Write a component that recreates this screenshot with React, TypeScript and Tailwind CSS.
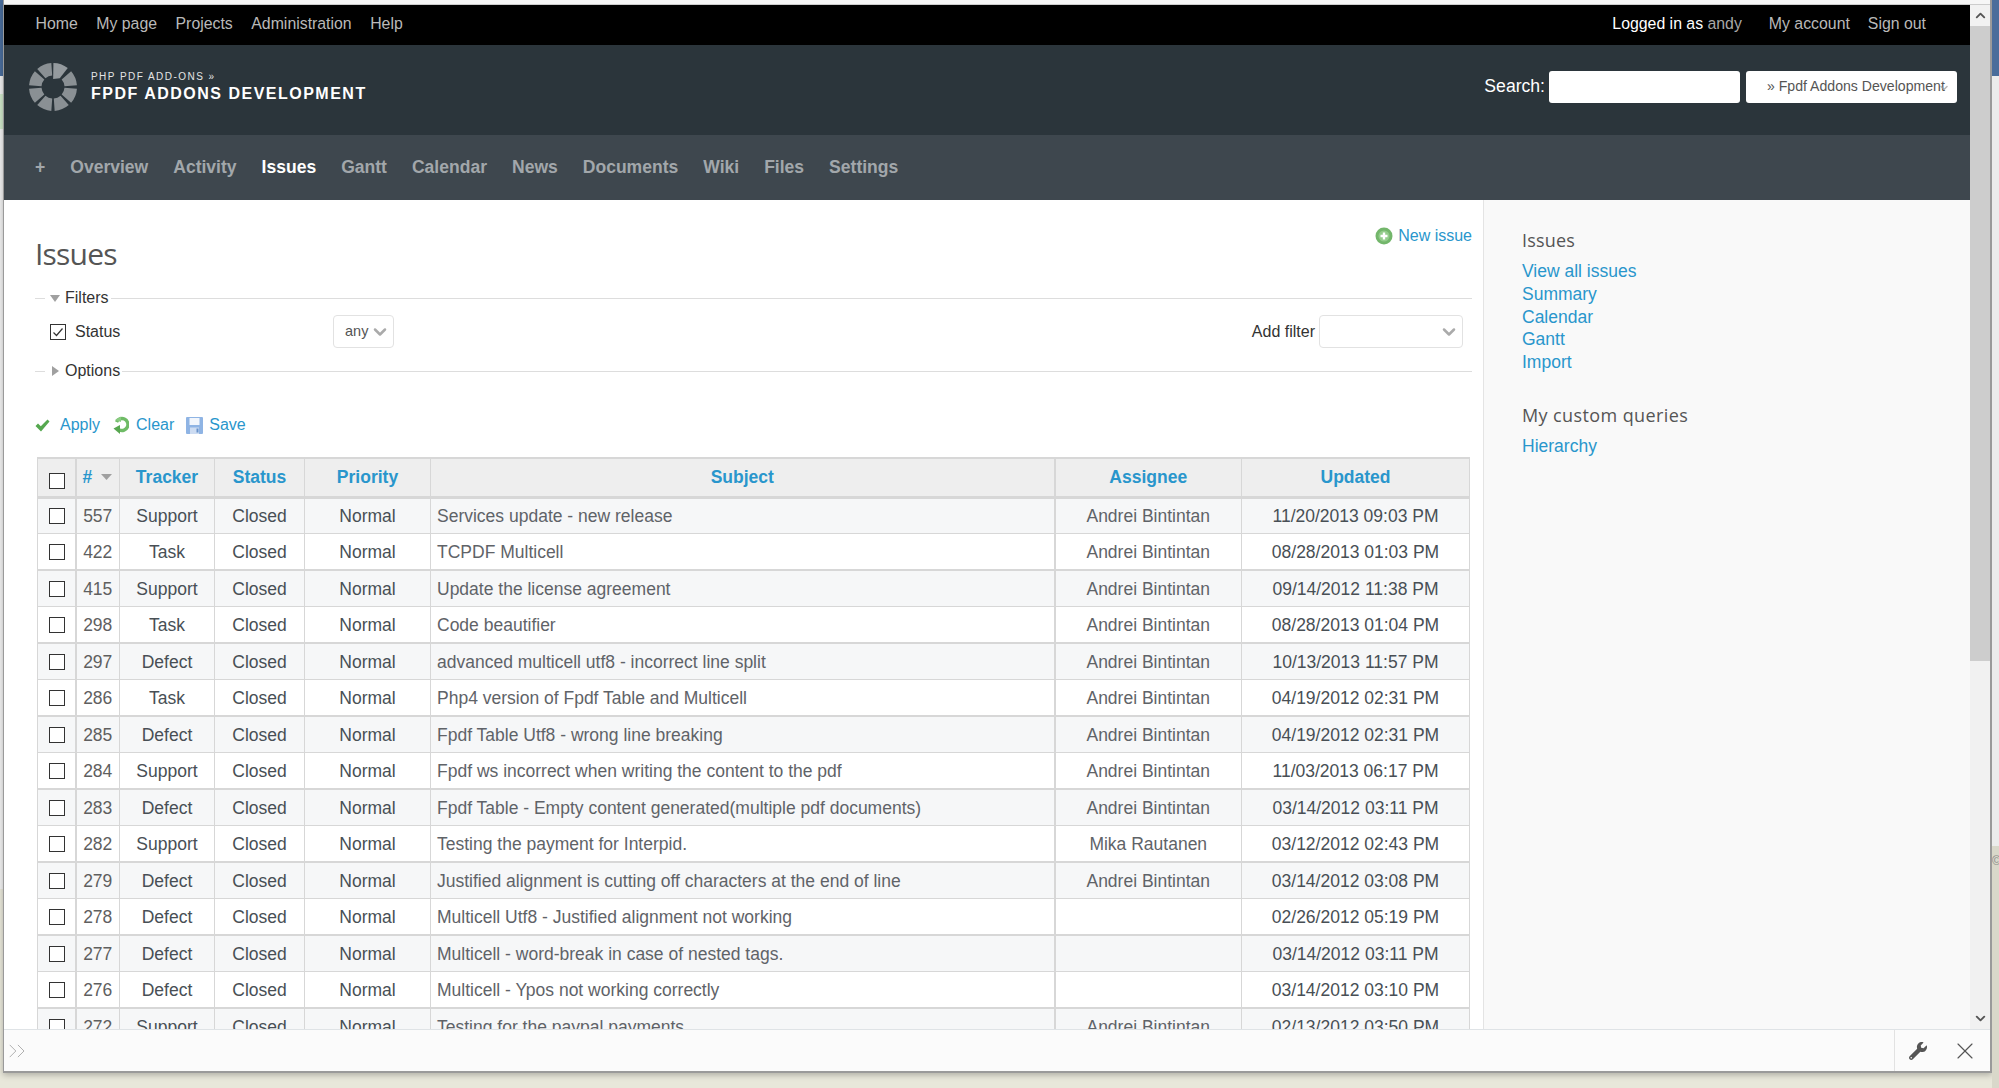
import { ChevronDown, ChevronUp, ChevronsRight, X } from "lucide-react";
import { FaWrench } from "react-icons/fa";

const topLeft = ["Home", "My page", "Projects", "Administration", "Help"];
const projectMenu = ["Overview", "Activity", "Issues", "Gantt", "Calendar", "News", "Documents", "Wiki", "Files", "Settings"];
const sidebarLinks = ["View all issues", "Summary", "Calendar", "Gantt", "Import"];

const AB = "Andrei Bintintan";
const issues = [
  ["557", "Support", "Services update - new release", AB, "11/20/2013 09:03 PM"],
  ["422", "Task", "TCPDF Multicell", AB, "08/28/2013 01:03 PM"],
  ["415", "Support", "Update the license agreement", AB, "09/14/2012 11:38 PM"],
  ["298", "Task", "Code beautifier", AB, "08/28/2013 01:04 PM"],
  ["297", "Defect", "advanced multicell utf8 - incorrect line split", AB, "10/13/2013 11:57 PM"],
  ["286", "Task", "Php4 version of Fpdf Table and Multicell", AB, "04/19/2012 02:31 PM"],
  ["285", "Defect", "Fpdf Table Utf8 - wrong line breaking", AB, "04/19/2012 02:31 PM"],
  ["284", "Support", "Fpdf ws incorrect when writing the content to the pdf", AB, "11/03/2013 06:17 PM"],
  ["283", "Defect", "Fpdf Table - Empty content generated(multiple pdf documents)", AB, "03/14/2012 03:11 PM"],
  ["282", "Support", "Testing the payment for Interpid.", "Mika Rautanen", "03/12/2012 02:43 PM"],
  ["279", "Defect", "Justified alignment is cutting off characters at the end of line", AB, "03/14/2012 03:08 PM"],
  ["278", "Defect", "Multicell Utf8 - Justified alignment not working", "", "02/26/2012 05:19 PM"],
  ["277", "Defect", "Multicell - word-break in case of nested tags.", "", "03/14/2012 03:11 PM"],
  ["276", "Defect", "Multicell - Ypos not working correctly", "", "03/14/2012 03:10 PM"],
  ["272", "Support", "Testing for the paypal payments", AB, "02/13/2012 03:50 PM"],
];

function polar(r: number, deg: number) {
  const a = ((deg - 90) * Math.PI) / 180;
  return `${(24 + r * Math.cos(a)).toFixed(2)} ${(24 + r * Math.sin(a)).toFixed(2)}`;
}

function sector(from: number, to: number, inner: number, outer: number) {
  return `M${polar(inner, from)} L${polar(outer, from)} A${outer} ${outer} 0 0 1 ${polar(outer, to)} L${polar(inner, to)} A${inner} ${inner} 0 0 0 ${polar(inner, from)} Z`;
}

function Logo() {
  return (
    <svg width="48" height="48" viewBox="0 0 48 48" className="shrink-0">
      <path d={`M${polar(8, 1)} L${polar(24, 1)} A24 24 0 0 1 ${polar(24, 38)} L${polar(11, 38)} Z`} fill="#949a9e" />
      {[45, 90, 135, 180, 225, 270, 315].map((a) => (
        <path key={a} d={sector(a + 4, a + 41, 11.5, 24)} fill="#8a9094" />
      ))}
    </svg>
  );
}

function Checkbox({ checked }: { checked?: boolean }) {
  return (
    <span className="flex h-[16px] w-[16px] shrink-0 items-center justify-center border border-[#333] bg-white">
      {checked && (
        <svg width="12" height="12" viewBox="0 0 12 12">
          <path d="M1.5 6.5 L4.5 9.5 L10.5 2.5" fill="none" stroke="#333" strokeWidth="1.2" />
        </svg>
      )}
    </span>
  );
}

function Legend({ label, open }: { label: string; open?: boolean }) {
  return (
    <div className="flex h-[24px] items-center text-[16px] text-[#333]">
      <span className="h-px w-[10px] bg-[#ddd]" />
      <span className="flex w-[20px] justify-center">
        {open ? (
          <svg width="10" height="7" viewBox="0 0 10 7"><path d="M0 0 H10 L5 7 Z" fill="#a0a0a0" /></svg>
        ) : (
          <svg width="7" height="10" viewBox="0 0 7 10"><path d="M0 0 V10 L7 5 Z" fill="#a0a0a0" /></svg>
        )}
      </span>
      <span className="pr-[2px]">{label}</span>
      <span className="h-px flex-1 bg-[#ddd]" />
    </div>
  );
}

function NewIssueIcon() {
  return (
    <svg width="18" height="18" viewBox="0 0 18 18" className="shrink-0">
      <circle cx="9" cy="9" r="8.5" fill="#73b66b" />
      <circle cx="9" cy="9" r="5.5" fill="#93cc8b" />
      <path d="M9 5.5 V12.5 M5.5 9 H12.5" stroke="#fff" strokeWidth="2.4" />
    </svg>
  );
}

function ApplyIcon() {
  return (
    <svg width="15" height="13" viewBox="0 0 15 13" className="shrink-0">
      <path d="M0.5 7 L3 4.5 L5.8 7.2 L12.5 0.5 L14.5 2.5 L6 12.5 Z" fill="#55a84f" />
    </svg>
  );
}

function ClearIcon() {
  return (
    <svg width="16" height="18" viewBox="0 0 16 18" className="shrink-0">
      <path d="M3.5 6 A6 6 0 1 1 6.5 14" fill="none" stroke="#6fbb66" strokeWidth="3.4" />
      <path d="M0.5 12.5 L7 9 L7 18 Z" fill="#58a750" />
      <path d="M2 4 L8 0.5 L8 6 Z" fill="#8acb82" />
    </svg>
  );
}

function SaveIcon() {
  return (
    <svg width="17" height="17" viewBox="0 0 17 17" className="shrink-0">
      <rect width="17" height="17" rx="1" fill="#8fb4e4" />
      <rect x="3.5" y="1" width="10" height="7" fill="#f2f6fc" />
      <rect x="4" y="10.5" width="9" height="6.5" fill="#cddcf2" />
      <rect x="10.5" y="11.5" width="2" height="4" fill="#6a93cb" />
    </svg>
  );
}

const headCell = "border-x border-[#d7d7d7] text-center align-middle text-[17.5px] font-bold text-[#2996cc]";
const bodyCell = "border-x border-[#d7d7d7] pt-[1px] text-center align-middle";

function IssueTable() {
  return (
    <table className="ml-[2px] w-[1432px] table-fixed border-collapse border-t-2 border-[#d7d7d7] text-[17.5px]">
      <colgroup>
        <col className="w-[38px]" />
        <col className="w-[44px]" />
        <col className="w-[95px]" />
        <col className="w-[90px]" />
        <col className="w-[126px]" />
        <col className="w-[624px]" />
        <col className="w-[187px]" />
        <col className="w-[228px]" />
      </colgroup>
      <thead>
        <tr className="h-[39px] border-b-[3px] border-[#d7d7d7] bg-[#eeeeee]">
          <th className={`${headCell} border-r-2`}>
            <span className="flex justify-center pl-[1px] pt-[7px]"><Checkbox /></span>
          </th>
          <th className={`${headCell} text-left`}>
            <span className="flex items-center gap-[9px] pl-[6px]">
              #
              <svg width="11" height="6" viewBox="0 0 11 6"><path d="M0 0 H11 L5.5 6 Z" fill="#a0a0a0" /></svg>
            </span>
          </th>
          <th className={headCell}>Tracker</th>
          <th className={headCell}>Status</th>
          <th className={headCell}>Priority</th>
          <th className={`${headCell} border-r-2`}>Subject</th>
          <th className={headCell}>Assignee</th>
          <th className={headCell}>Updated</th>
        </tr>
      </thead>
      <tbody>
        {issues.map((row, i) => (
          <tr
            key={row[0]}
            className={i % 2 === 0 ? "h-[36px] border-b border-[#d7d7d7] bg-[#f6f7f8]" : "h-[37px] border-b-2 border-[#d7d7d7] bg-white"}
          >
            <td className={`${bodyCell} border-r-2`}>
              <span className="flex justify-center pl-[1px]"><Checkbox /></span>
            </td>
            <td className={`${bodyCell} text-[#5f5f5f]`}>{row[0]}</td>
            <td className={`${bodyCell} text-[#484f55]`}>{row[1]}</td>
            <td className={`${bodyCell} text-[#484f55]`}>Closed</td>
            <td className={`${bodyCell} text-[#484f55]`}>Normal</td>
            <td className={`${bodyCell} border-r-2 pl-[6px] text-left text-[#5f6368]`}>{row[2]}</td>
            <td className={`${bodyCell} text-[#5f6368]`}>{row[3]}</td>
            <td className={`${bodyCell} text-[#484f55]`}>{row[4]}</td>
          </tr>
        ))}
      </tbody>
    </table>
  );
}

function Sidebar() {
  return (
    <aside className="w-[487px] shrink-0 border-l border-[#e4e4e4] bg-[#f9f9f9] pl-[38px] pt-[28px]">
      <h3 className="font-['Open_Sans',sans-serif] text-[18px] leading-[24px] tracking-[0.2px] text-[#555]">Issues</h3>
      <ul className="mt-[8px] text-[17.5px] leading-[22.8px] text-[#2996cc]">
        {sidebarLinks.map((l) => (
          <li key={l}>{l}</li>
        ))}
      </ul>
      <h3 className="mt-[29px] font-['Open_Sans',sans-serif] text-[18px] leading-[24px] tracking-[0.4px] text-[#555]">My custom queries</h3>
      <div className="mt-[8px] text-[17.5px] leading-[22.8px] text-[#2996cc]">Hierarchy</div>
    </aside>
  );
}

function ScrollBar() {
  return (
    <div className="flex w-[20px] shrink-0 flex-col bg-[#f1f1f1]">
      <div className="flex h-[21px] items-center justify-center text-[#555]"><ChevronUp size={15} strokeWidth={3} /></div>
      <div className="h-[635px] bg-[#cdcdcd]" />
      <div className="flex flex-1 items-end justify-center pb-[3px] text-[#555]"><ChevronDown size={15} strokeWidth={3} /></div>
    </div>
  );
}

export default function App() {
  return (
    <div className="flex h-[1088px] w-[1999px] overflow-hidden bg-[#e8e7da] font-['Liberation_Sans',Arial,sans-serif]">
      <div className="flex h-full w-[3px] shrink-0 flex-col">
        <div className="h-[76px] bg-[#4a6d9b]" />
        <div className="h-[18px] bg-[#eeeeee]" />
        <div className="h-[35px] bg-[#cfe6c9]" />
        <div className="h-[760px] bg-[#f0f0f0]" />
      </div>

      <div className="flex h-[1073px] w-[1989px] shrink-0 flex-col border-x border-b-2 border-[#9a9a9a] border-r-2 bg-white shadow-[0_2px_6px_rgba(0,0,0,0.25)]">
        <div className="h-[5px] shrink-0 border-b border-[#cccccc] bg-[#f6f6f6]" />

        <div className="flex min-h-0 flex-1">
          <div className="flex min-w-0 flex-1 flex-col">
            <div className="flex h-[40px] shrink-0 items-center justify-between bg-black pb-[2px] pl-[31.5px] pr-[44px] text-[15.85px] text-[#b9b9b9]">
              <nav className="flex gap-[18.5px]">
                {topLeft.map((t) => (
                  <span key={t}>{t}</span>
                ))}
              </nav>
              <div className="flex">
                <span className="text-white">Logged in as <span className="text-[#a8a8a8]">andy</span></span>
                <span className="ml-[27px]">My account</span>
                <span className="ml-[18px]">Sign out</span>
              </div>
            </div>

            <header className="flex h-[90px] shrink-0 items-center justify-between bg-[#2b353b] pl-[25px] pr-[13px]">
              <div className="flex items-center gap-[14px] pb-[7px]">
                <Logo />
                <div>
                  <div className="text-[10px] leading-[14px] tracking-[1.45px] text-[#e4e4e4]">PHP PDF ADD-ONS »</div>
                  <div className="text-[16px] font-bold leading-[20px] tracking-[1.5px] text-white">FPDF ADDONS DEVELOPMENT</div>
                </div>
              </div>
              <div className="flex items-center pb-[7px]">
                <span className="mr-[4px] text-[17.6px] text-white">Search:</span>
                <div className="h-[32px] w-[191px] rounded-[3px] bg-white" />
                <div className="relative ml-[6px] flex h-[32px] w-[211px] items-center rounded-[3px] bg-white pl-[21px] text-[14.1px] text-[#555]">
                  » Fpdf Addons Development
                  <ChevronDown size={12} strokeWidth={3} className="absolute right-[7px] top-[11px] text-[#999] opacity-70" />
                </div>
              </div>
            </header>

            <nav className="flex h-[65px] shrink-0 items-center gap-[25px] bg-[#3e474e] pl-[31px] text-[17.55px] font-bold text-[#a2a7ab]">
              <span>+</span>
              {projectMenu.map((m) => (
                <span key={m} className={m === "Issues" ? "text-white" : undefined}>{m}</span>
              ))}
            </nav>

            <main className="flex min-h-0 flex-1 overflow-hidden">
              <section className="min-w-0 flex-1 pl-[31px] pr-[11px]">
                <div className="flex h-[86px] justify-between">
                  <h2 className="pt-[36px] font-['Open_Sans',sans-serif] text-[30px] leading-[36px] tracking-[-0.8px] text-[#555]">Issues</h2>
                  <a className="mt-[27px] flex h-[18px] items-center gap-[5px] text-[16px] text-[#2996cc]">
                    <NewIssueIcon />
                    New issue
                  </a>
                </div>

                <Legend label="Filters" open />
                <div className="mt-[5px] flex h-[33px] items-center justify-between pr-[9px] text-[16px] text-[#333]">
                  <div className="flex items-center">
                    <span className="ml-[15px] mr-[9px]"><Checkbox checked /></span>
                    <span className="w-[258px]">Status</span>
                    <div className="flex h-[33px] w-[61px] items-center justify-between rounded-[4px] border border-[#e2e2e2] pl-[11px] pr-[3px] text-[14.5px] text-[#555]">
                      any
                      <ChevronDown size={20} strokeWidth={3} className="text-[#aaa]" />
                    </div>
                  </div>
                  <div className="flex items-center gap-[4px]">
                    Add filter
                    <div className="flex h-[33px] w-[144px] items-center justify-end rounded-[4px] border border-[#e2e2e2] pr-[3px]">
                      <ChevronDown size={20} strokeWidth={3} className="text-[#aaa]" />
                    </div>
                  </div>
                </div>
                <div className="mt-[11px]">
                  <Legend label="Options" />
                </div>

                <div className="mt-[30px] flex h-[24px] items-center text-[16px] text-[#2996cc]">
                  <ApplyIcon />
                  <span className="ml-[10px]">Apply</span>
                  <span className="ml-[13px]"><ClearIcon /></span>
                  <span className="ml-[7px]">Clear</span>
                  <span className="ml-[12px]"><SaveIcon /></span>
                  <span className="ml-[6px]">Save</span>
                </div>

                <div className="mt-[20px]">
                  <IssueTable />
                </div>
              </section>
              <Sidebar />
            </main>
          </div>
          <ScrollBar />
        </div>

        <footer className="flex h-[42px] shrink-0 items-center justify-between border-t border-[#dfe3e6] bg-[#fbfbfb] text-[#555]">
          <ChevronsRight size={28} strokeWidth={0.8} className="-ml-[1px] text-[#aaa]" />
          <div className="flex h-full w-[96px] items-center border-l border-[#e2e2e2] pl-[14px]">
            <FaWrench size={18} />
            <X size={28} strokeWidth={1} className="ml-[24px]" />
          </div>
        </footer>
      </div>

      <div className="flex h-full flex-1 flex-col">
        <div className="h-[76px] bg-[#4a6d9b]" />
        <div className="h-[770px] bg-[#ececec]" />
        <div className="flex-1 bg-[#d9d8ca] text-[12px] leading-[30px] text-[#888]">©</div>
      </div>
    </div>
  );
}
